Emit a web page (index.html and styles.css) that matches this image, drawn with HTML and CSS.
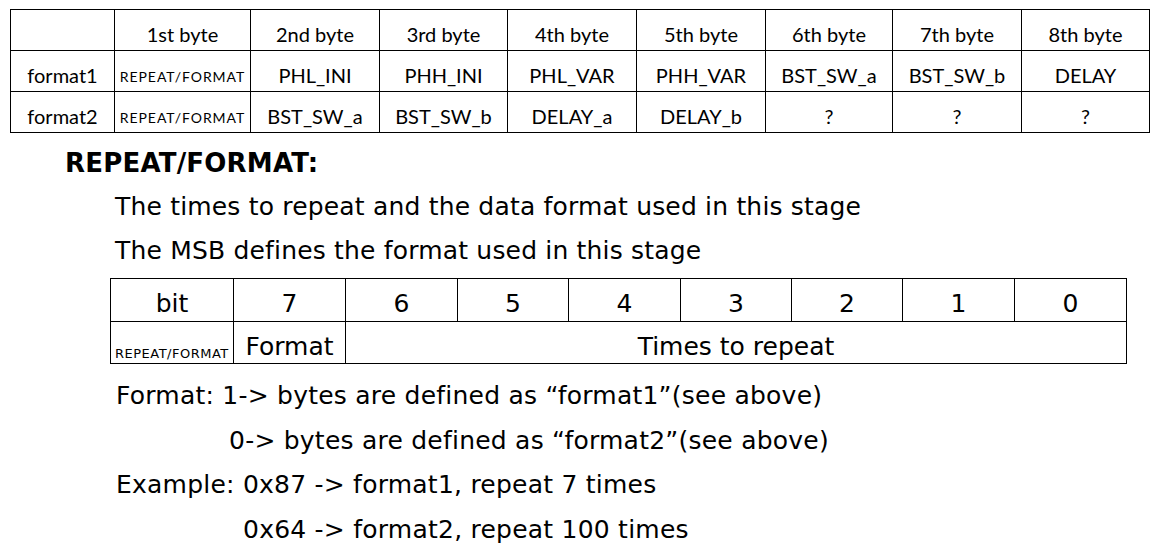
FILE: index.html
```html
<!DOCTYPE html>
<html>
<head>
<meta charset="utf-8">
<link rel="stylesheet" href="styles.css">
</head>
<body>
<div class="bytes">
  <div class="c"></div>
  <div class="c">1st byte</div>
  <div class="c">2nd byte</div>
  <div class="c">3rd byte</div>
  <div class="c">4th byte</div>
  <div class="c">5th byte</div>
  <div class="c">6th byte</div>
  <div class="c">7th byte</div>
  <div class="c">8th byte</div>

  <div class="c">format1</div>
  <div class="c small">REPEAT/FORMAT</div>
  <div class="c">PHL_INI</div>
  <div class="c">PHH_INI</div>
  <div class="c">PHL_VAR</div>
  <div class="c">PHH_VAR</div>
  <div class="c">BST_SW_a</div>
  <div class="c">BST_SW_b</div>
  <div class="c">DELAY</div>

  <div class="c">format2</div>
  <div class="c small">REPEAT/FORMAT</div>
  <div class="c">BST_SW_a</div>
  <div class="c">BST_SW_b</div>
  <div class="c">DELAY_a</div>
  <div class="c">DELAY_b</div>
  <div class="c">?</div>
  <div class="c">?</div>
  <div class="c">?</div>
</div>

<h2 class="heading">REPEAT/FORMAT:</h2>
<p class="line">The times to repeat and the data format used in this stage</p>
<p class="line">The MSB defines the format used in this stage</p>

<div class="bits">
  <div class="b r1">bit</div>
  <div class="b r1">7</div>
  <div class="b r1">6</div>
  <div class="b r1">5</div>
  <div class="b r1">4</div>
  <div class="b r1">3</div>
  <div class="b r1">2</div>
  <div class="b r1">1</div>
  <div class="b r1">0</div>
  <div class="b r2 tiny">REPEAT/FORMAT</div>
  <div class="b r2">Format</div>
  <div class="b r2 span">Times to repeat</div>
</div>

<div class="notes">
  <p class="note">Format: 1-&gt; bytes are defined as “format1”(see above)</p>
  <p class="note ind1">0-&gt; bytes are defined as “format2”(see above)</p>
  <p class="note">Example: 0x87 -&gt; format1, repeat 7 times</p>
  <p class="note ind2">0x64 -&gt; format2, repeat 100 times</p>
</div>
</body>
</html>
```

FILE: styles.css
```css
body {
  margin: 0;
  background: #fff;
  color: #000;
  font-family: "DejaVu Sans", Verdana, sans-serif;
}

.bytes {
  display: grid;
  grid-template-columns: 104px 136px 129px 128px 129px 129px 127px 129px 128px;
  grid-auto-rows: 41px;
  margin: 9px 0 0 10px;
  width: max-content;
  border-top: 1px solid #000;
  border-left: 1px solid #000;
  font-family: Lato, "Liberation Sans", sans-serif;
  font-size: 20px;
}

.bytes .c {
  box-sizing: border-box;
  border-right: 1px solid #000;
  border-bottom: 1px solid #000;
  display: flex;
  align-items: flex-end;
  justify-content: center;
  line-height: 20px;
  padding-bottom: 6px;
  white-space: nowrap;
}

.bytes .small {
  font-size: 14px;
  line-height: 14px;
  letter-spacing: 0.95px;
  padding-bottom: 7px;
}

.heading {
  margin: 9px 0 0 65px;
  font-size: 26px;
  line-height: 43px;
  font-weight: bold;
  letter-spacing: 0.2px;
}

.line {
  margin: 0 0 0 115px;
  font-size: 25px;
  line-height: 43px;
  letter-spacing: 0.18px;
}

.line + .line {
  margin-top: 1px;
}

.bits {
  display: grid;
  grid-template-columns: 123px repeat(2, 112px) 111px 112px 111px 111px 112px 112px;
  grid-template-rows: 43px 42px;
  margin: 6px 0 0 110px;
  width: max-content;
  border-top: 1px solid #000;
  border-left: 1px solid #000;
  font-size: 25px;
}

.bits .b {
  box-sizing: border-box;
  border-right: 1px solid #000;
  border-bottom: 1px solid #000;
  display: flex;
  align-items: flex-end;
  justify-content: center;
  line-height: 25px;
  padding-bottom: 5px;
  white-space: nowrap;
}

.bits .r2 {
  padding-bottom: 4px;
}

.bits .tiny {
  font-size: 13px;
  line-height: 13px;
  letter-spacing: 0.5px;
  justify-content: flex-start;
  padding: 0 0 3px 4px;
}

.bits .span {
  grid-column: span 7;
}

.notes {
  margin: 10px 0 0 0;
}

.note {
  margin: 0 0 0 116px;
  font-size: 25px;
  line-height: 44.6px;
  letter-spacing: 0.23px;
  white-space: nowrap;
}

.note.ind1 {
  margin-left: 229px;
}

.note.ind2 {
  margin-left: 243px;
}
```
